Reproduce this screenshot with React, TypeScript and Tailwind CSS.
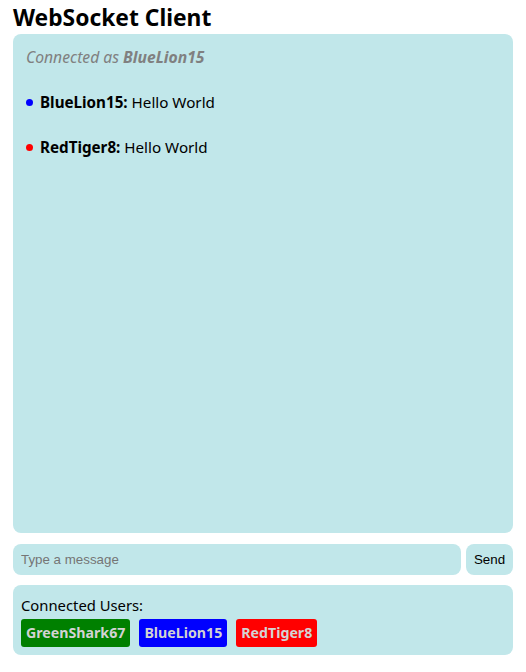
import React from "react";

export default function App() {
  const font = { fontFamily: '"Noto Sans", "Open Sans", sans-serif' };
  return (
    <div className="flex h-[672px] flex-col bg-white px-[13px] text-black" style={font}>
      <h1 className="pt-[2px] text-[22.8px] font-bold leading-[32px]">WebSocket Client</h1>
      <div className="h-[499px] rounded-[8px] bg-[#c1e7ea] p-[13px]">
        <div className="text-[15.7px] italic leading-[20px] text-[#808080]">
          Connected as <b>BlueLion15</b>
        </div>
        <div className="mt-[25px] flex items-center text-[15.2px] leading-[20px]">
          <span className="mr-[7px] inline-block h-[7px] w-[7px] rounded-full bg-[#0000ff]" />
          <b>BlueLion15:</b>&nbsp;Hello World
        </div>
        <div className="mt-[25px] flex items-center text-[15.2px] leading-[20px]">
          <span className="mr-[7px] inline-block h-[7px] w-[7px] rounded-full bg-[#ff0000]" />
          <b>RedTiger8:</b>&nbsp;Hello World
        </div>
      </div>
      <div className="mt-[11px] flex h-[31px] gap-[5px]">
        <input
          className="flex-1 rounded-[8px] bg-[#c1e7ea] px-[8px] text-[13.33px] outline-none placeholder:text-[#757575]"
          style={{ fontFamily: '"Liberation Sans", Arial, sans-serif' }}
          placeholder="Type a message"
        />
        <button
          className="w-[47px] rounded-[8px] bg-[#c1e7ea] text-[13.33px]"
          style={{ fontFamily: '"Liberation Sans", Arial, sans-serif' }}
        >
          Send
        </button>
      </div>
      <div className="mt-[10px] h-[70px] rounded-[8px] bg-[#c1e7ea] px-[8px] pt-[10px]">
        <div className="text-[14.8px] leading-[20px]">Connected Users:</div>
        <div className="mt-[4px] flex gap-[9px]">
          <span className="rounded-[3px] bg-[#008000] px-[5px] text-[14.2px] font-bold leading-[28px] text-[#d3d3d3]">GreenShark67</span>
          <span className="rounded-[3px] bg-[#0000ff] px-[5px] text-[14.2px] font-bold leading-[28px] text-[#d3d3d3]">BlueLion15</span>
          <span className="rounded-[3px] bg-[#ff0000] px-[5px] text-[14.2px] font-bold leading-[28px] text-[#d3d3d3]">RedTiger8</span>
        </div>
      </div>
    </div>
  );
}
